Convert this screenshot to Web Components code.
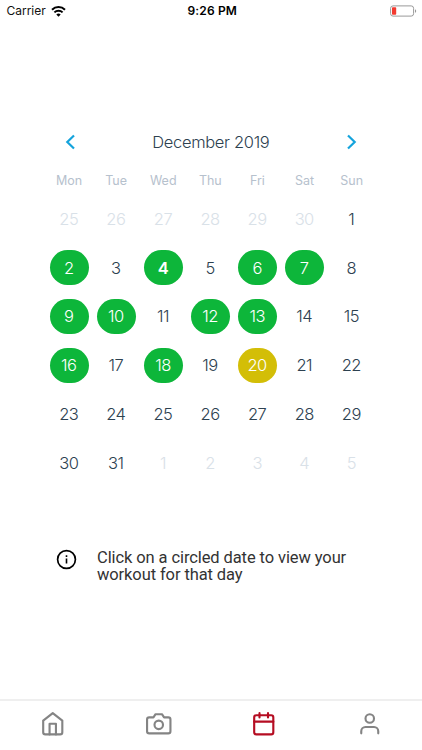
<!DOCTYPE html>
<html lang="en">
<head>
<meta charset="utf-8">
<title>Workout calendar</title>
<style>
html,body{margin:0;height:100%;background:#fff}
</style>
</head>
<body>
<workout-screen></workout-screen>
<script>
const define = (name, render) => customElements.define(name, class extends HTMLElement {
  constructor() { super(); this.attachShadow({mode: 'open'}); }
  connectedCallback() { this.shadowRoot.innerHTML = render(this); }
});

define('status-bar', () => `<style>
:host{display:grid;grid-template-columns:1fr auto 1fr;align-items:center;height:22px;padding:0 5px 0 6.5px;box-sizing:border-box;font:400 12px/22px Inter,sans-serif;color:#111}
.left{display:flex;align-items:center;gap:5px;letter-spacing:-.02px}
b{font-weight:600;color:#000;letter-spacing:.15px;padding-left:1px}
.bat{justify-self:end}
svg{display:block}
</style>
<div class="left"><span>Carrier</span><svg width="15" height="11" viewBox="0 0 15 11"><g fill="none" stroke="#000" stroke-width="2"><path d="M1 3.8a9.2 9.2 0 0 1 13 0"/><path d="M3.4 6.4a5.8 5.8 0 0 1 8.2 0"/></g><path d="M7.5 10.7 5.3 8.5a3.1 3.1 0 0 1 4.4 0z"/></svg></div>
<b>9:26 PM</b>
<svg class="bat" width="27" height="12" viewBox="0 0 27 12"><rect x=".6" y=".9" width="23" height="10.2" rx="2.4" fill="none" stroke="#999" stroke-width="1"/><rect x="2" y="2.3" width="4.2" height="7.4" rx=".8" fill="#f33a30"/><path d="M25 4.2c1.6.5 1.6 3.1 0 3.6z" fill="#999"/></svg>`);

define('day-cell', el => `<style>
:host{display:flex;align-items:center;justify-content:center;color:#2d4150;font:300 16.5px/20px Inter,sans-serif;letter-spacing:-.5px}
:host([kind=out]){color:#d9e1e8}
span{display:flex;align-items:center;justify-content:center;width:39px;height:35px;border-radius:18px;box-sizing:border-box;padding-right:.6px}
:host([kind=done]) span{background:#0db63a;color:#fff}
:host([kind=today]) span{background:#0db63a;color:#fff;font-weight:600}
:host([kind=next]) span{background:#d3be07;color:#fff}
</style><span><slot></slot></span>`);

define('month-calendar', () => {
  const done = [2,6,7,9,10,12,13,16,18];
  let days = '';
  for (let i = 0; i < 42; i++) {
    const n = i - 5;
    const out = n < 1 || n > 31;
    const label = n < 1 ? n + 30 : n > 31 ? n - 31 : n;
    const kind = out ? 'out' : n === 4 ? 'today' : n === 20 ? 'next' : done.includes(n) ? 'done' : 'open';
    days += `<day-cell kind="${kind}">${label}</day-cell>`;
  }
  return `<style>
:host{display:block;width:329.7px;font-family:Inter,sans-serif}
header{display:grid;grid-template-columns:47.1px 1fr 47.1px;align-items:center;justify-items:center;height:40px}
h1{margin:0;font-size:16.5px;line-height:20px;font-weight:300;color:#2d4150;letter-spacing:-.32px;padding-left:1px}
svg{display:block;margin-left:2px}
svg+h1+svg{margin-left:0}
.names,.days{display:grid;grid-template-columns:repeat(7,1fr)}
.names{height:20px;margin-top:9px;font:400 12.5px/20px Inter,sans-serif;color:#b6c1cd;text-align:center}
.days{grid-auto-rows:48.9px;margin-top:3.2px}
</style>
<header>
<svg width="12" height="16" viewBox="0 0 12 16" fill="none" stroke="#14a3dc" stroke-width="2.2"><path d="M10 1.5 3.3 8l6.7 6.5"/></svg>
<h1>December 2019</h1>
<svg width="12" height="16" viewBox="0 0 12 16" fill="none" stroke="#14a3dc" stroke-width="2.2"><path d="m2 1.5 6.7 6.5L2 14.5"/></svg>
</header>
<div class="names">${['Mon','Tue','Wed','Thu','Fri','Sat','Sun'].map(d => `<span>${d}</span>`).join('')}</div>
<div class="days">${days}</div>`;
});

define('info-note', () => `<style>
:host{display:flex;align-items:flex-start;gap:20px;color:#333;font:400 16.5px/17.5px Roboto,sans-serif;letter-spacing:-.1px}
svg{display:block;flex:none;margin-top:.5px}
p{margin:0;width:265px}
</style>
<svg width="21" height="21" viewBox="0 0 21 21" fill="none" stroke="#000"><circle cx="10.5" cy="10.5" r="8.9" stroke-width="1.7"/><path d="M10.5 9.6v5M10.5 6.2v1.7" stroke-width="1.6"/></svg>
<p><slot></slot></p>`);

const icons = {
  home: '<path d="m3 9 9-7 9 7v11a2 2 0 0 1-2 2H5a2 2 0 0 1-2-2z"/><path d="M9 22V12h6v10"/>',
  camera: '<path d="M23 19a2 2 0 0 1-2 2H3a2 2 0 0 1-2-2V8a2 2 0 0 1 2-2h4l2-3h6l2 3h4a2 2 0 0 1 2 2z"/><circle cx="12" cy="13" r="4"/>',
  calendar: '<rect x="3" y="4" width="18" height="18" rx="2"/><path d="M16 2v4M8 2v4M3 10h18"/>',
  user: '<path d="M20 21v-2a4 4 0 0 0-4-4H8a4 4 0 0 0-4 4v2"/><circle cx="12" cy="7" r="4"/>'
};
define('tab-item', el => `<style>
:host{display:flex;justify-content:center;align-items:center;color:#848484}
:host([active]){color:#b50d22}
svg{display:block;overflow:visible}
</style><svg width="25.5" height="25.5" viewBox="0 0 24 24" fill="none" stroke="currentColor" stroke-width="2" stroke-linecap="round" stroke-linejoin="round">${icons[el.getAttribute('icon')]}</svg>`);

define('tab-bar', () => `<style>
:host{display:grid;grid-template-columns:repeat(4,1fr);height:51px;padding-bottom:4px;box-sizing:border-box;border-top:2px solid #efefef}
</style><tab-item icon="home"></tab-item><tab-item icon="camera"></tab-item><tab-item icon="calendar" active></tab-item><tab-item icon="user"></tab-item>`);

define('workout-screen', () => `<style>
:host{display:flex;flex-direction:column;width:422px;height:750px;background:#fff}
month-calendar{margin:100px 0 0 45.5px}
info-note{margin:61px 0 0 56px}
tab-bar{margin-top:auto}
</style>
<status-bar></status-bar>
<month-calendar></month-calendar>
<info-note>Click on a circled date to view your workout for that day</info-note>
<tab-bar></tab-bar>`);
</script>
</body>
</html>
